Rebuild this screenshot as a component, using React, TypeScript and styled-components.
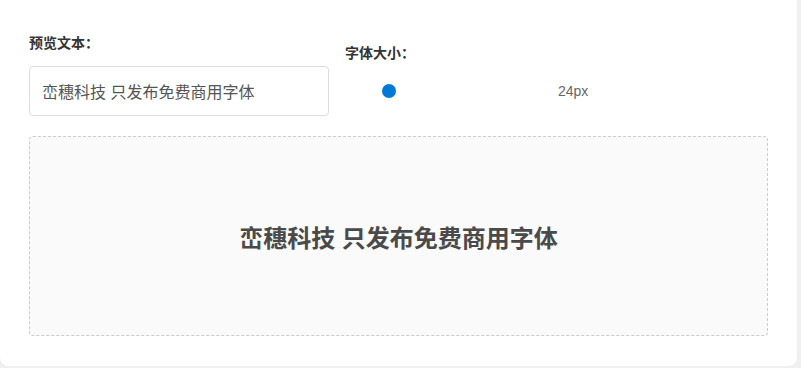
import styled, { createGlobalStyle } from "styled-components";
import { useState } from "react";

const GlobalStyle = createGlobalStyle`
    html, body {
        margin: 0;
        padding: 0;
        background: #f0f0f0;
        font-family: "Liberation Sans", "Noto Sans CJK SC", sans-serif;
    }
`;

const Card = styled.div`
    width: 797px;
    height: 366px;
    box-sizing: border-box;
    background: #fff;
    border-radius: 0 0 8px 8px;
    box-shadow: 0 0 2px rgba(0, 0, 0, 0.06);
    padding: 35px 29px 30px;
    display: flex;
    flex-direction: column;
    gap: 20px;
`;

// 입력 영역
const Controls = styled.div`
    display: flex;
    gap: 16px;
    align-items: flex-start;
`;

const Field = styled.div<{ $offset?: number }>`
    display: flex;
    flex-direction: column;
    gap: 14px;
    padding-top: ${(p) => p.$offset ?? 0}px;
`;

const Label = styled.label`
    font-size: 14px;
    font-weight: bold;
    color: #333;
    line-height: 17px;
`;

const TextInput = styled.input`
    width: 300px;
    height: 50px;
    box-sizing: border-box;
    border: 1px solid #ddd;
    border-radius: 4px;
    padding: 0 12px;
    font-size: 16px;
    color: #555;
    font-family: inherit;
    outline: none;
`;

const SliderRow = styled.div`
    display: flex;
    align-items: center;
    height: 30px;
    padding-left: 37px;
`;

const Range = styled.input`
    -webkit-appearance: none;
    appearance: none;
    width: 160px;
    height: 14px;
    margin: 0;
    background: transparent;

    &::-webkit-slider-runnable-track {
        height: 14px;
        background: transparent;
    }
    &::-webkit-slider-thumb {
        -webkit-appearance: none;
        width: 14px;
        height: 14px;
        border-radius: 50%;
        background: #0078d7;
        border: none;
    }
`;

const SizeValue = styled.span`
    margin-left: 16px;
    font-size: 14px;
    color: #666;
`;

// 미리보기
const Preview = styled.div<{ $size: number }>`
    height: 200px;
    box-sizing: border-box;
    border: 1px dashed #ccc;
    border-radius: 4px;
    background: #fafafa;
    display: flex;
    align-items: center;
    justify-content: center;
    font-size: ${(p) => p.$size}px;
    font-weight: bold;
    color: #4a4a4a;
`;

export default function App() {
    const [text, setText] = useState("峦穗科技 只发布免费商用字体");
    const [size, setSize] = useState(24);

    return (
        <>
            <GlobalStyle />
            <Card>
                <Controls>
                    <Field>
                        <Label>预览文本：</Label>
                        <TextInput
                            value={text}
                            onChange={(e) => setText(e.target.value)}
                        />
                    </Field>
                    <Field $offset={10}>
                        <Label>字体大小：</Label>
                        <SliderRow>
                            <Range
                                type='range'
                                min={24}
                                max={72}
                                value={size}
                                onChange={(e) => setSize(Number(e.target.value))}
                            />
                            <SizeValue>{size}px</SizeValue>
                        </SliderRow>
                    </Field>
                </Controls>
                <Preview $size={size}>{text}</Preview>
            </Card>
        </>
    );
}
